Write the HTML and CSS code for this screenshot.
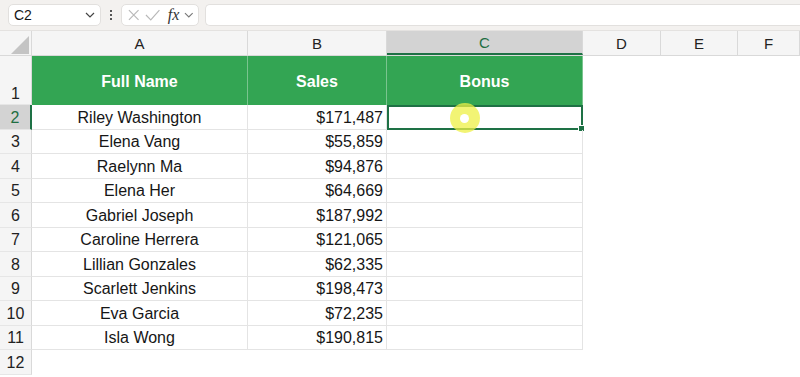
FILE: index.html
```html
<!DOCTYPE html>
<html lang="en">
<head>
    <meta charset="UTF-8">
    <meta name="viewport" content="width=device-width, initial-scale=1.0">
    <title>Sales Bonus</title>
    <link rel="stylesheet" href="styles.css">
</head>
<body>
    <div id="toolbar">
        <div class="name-box">
            <span>C2</span>
            <svg class="chev" width="10" height="6" viewBox="0 0 10 6"><path d="M1 1l4 4 4-4" fill="none" stroke="#444" stroke-width="1.2"/></svg>
        </div>
        <div class="dots"><i></i><i></i><i></i></div>
        <div class="fx-box">
            <svg width="14" height="14" viewBox="0 0 14 14"><path d="M2 2l10 10M12 2L2 12" stroke="#b8b8b8" stroke-width="1.2"/></svg>
            <svg width="16" height="14" viewBox="0 0 16 14"><path d="M1 7l5 5 9-10" fill="none" stroke="#b8b8b8" stroke-width="1.2"/></svg>
            <span class="fx">fx</span>
            <svg class="chev" width="10" height="6" viewBox="0 0 10 6"><path d="M1 1l4 4 4-4" fill="none" stroke="#777" stroke-width="1.1"/></svg>
        </div>
        <div class="formula"></div>
    </div>

    <div id="sheet">
        <div class="row col-heads">
            <div class="corner"><span class="tri"></span></div>
            <div class="ch">A</div>
            <div class="ch">B</div>
            <div class="ch active">C</div>
            <div class="ch">D</div>
            <div class="ch">E</div>
            <div class="ch">F</div>
        </div>

        <div class="row head-row">
            <div class="rh">1</div>
            <div class="cell th">Full Name</div>
            <div class="cell th">Sales</div>
            <div class="cell th">Bonus</div>
        </div>

        <div class="row">
            <div class="rh active">2</div>
            <div class="cell name">Riley Washington</div>
            <div class="cell num">$171,487</div>
            <div class="cell selected">
                <span class="handle"></span>
                <span class="pointer"><b></b></span>
            </div>
        </div>
        <div class="row"><div class="rh">3</div><div class="cell name">Elena Vang</div><div class="cell num">$55,859</div><div class="cell"></div></div>
        <div class="row"><div class="rh">4</div><div class="cell name">Raelynn Ma</div><div class="cell num">$94,876</div><div class="cell"></div></div>
        <div class="row"><div class="rh">5</div><div class="cell name">Elena Her</div><div class="cell num">$64,669</div><div class="cell"></div></div>
        <div class="row"><div class="rh">6</div><div class="cell name">Gabriel Joseph</div><div class="cell num">$187,992</div><div class="cell"></div></div>
        <div class="row"><div class="rh">7</div><div class="cell name">Caroline Herrera</div><div class="cell num">$121,065</div><div class="cell"></div></div>
        <div class="row"><div class="rh">8</div><div class="cell name">Lillian Gonzales</div><div class="cell num">$62,335</div><div class="cell"></div></div>
        <div class="row"><div class="rh">9</div><div class="cell name">Scarlett Jenkins</div><div class="cell num">$198,473</div><div class="cell"></div></div>
        <div class="row"><div class="rh">10</div><div class="cell name">Eva Garcia</div><div class="cell num">$72,235</div><div class="cell"></div></div>
        <div class="row"><div class="rh">11</div><div class="cell name">Isla Wong</div><div class="cell num">$190,815</div><div class="cell"></div></div>
        <div class="row"><div class="rh">12</div></div>
    </div>
</body>
</html>
```

FILE: styles.css
```css
body {
    margin: 0;
    font-family: "Liberation Sans", Arial, sans-serif;
    background: #fff;
    color: #161616;
    overflow: hidden;
}

/* formula bar */
#toolbar {
    height: 31px;
    box-sizing: border-box;
    padding: 4px 0 4px 8px;
    background: #f3f1ef;
    display: flex;
    align-items: stretch;
    gap: 6px;
    border-bottom: 1px solid #e4e2e0;
}

.name-box {
    width: 93px;
    box-sizing: border-box;
    background: #fff;
    border: 1px solid #e2e0de;
    border-radius: 5px;
    display: flex;
    align-items: center;
    justify-content: space-between;
    padding: 0 5px 0 5px;
    font-size: 14px;
}

.dots {
    width: 8px;
    display: flex;
    flex-direction: column;
    justify-content: center;
    align-items: center;
    gap: 2px;
}

.dots i {
    width: 2px;
    height: 2px;
    background: #555;
}

.fx-box {
    width: 78px;
    box-sizing: border-box;
    background: #fff;
    border: 1px solid #e2e0de;
    border-radius: 5px;
    display: flex;
    align-items: center;
    gap: 5px;
    padding: 0 4px 0 5px;
}

.fx {
    font-family: "Liberation Serif", serif;
    font-style: italic;
    font-size: 16px;
    color: #333;
    margin-left: 2px;
}

.formula {
    flex: 1;
    background: #fff;
    border: 1px solid #e2e0de;
    border-right: none;
    border-radius: 5px 0 0 5px;
}

/* grid */
.row {
    display: grid;
    grid-template-columns: 32px 216px 139px 196px 78px 77px 1fr;
    height: 24.5px;
}

.col-heads {
    height: 25px;
    background: #f5f5f5;
    border-bottom: 1px solid #d9d9d9;
    box-sizing: border-box;
}

.corner {
    position: relative;
    border-right: 1px solid #d9d9d9;
}

.tri {
    position: absolute;
    right: 2px;
    bottom: 1px;
    width: 0;
    height: 0;
    border-left: 18px solid transparent;
    border-bottom: 18px solid #c4c4c4;
}

.ch {
    display: flex;
    align-items: center;
    justify-content: center;
    font-size: 15px;
    color: #222;
    border-right: 1px solid #d9d9d9;
}

.ch.active {
    background: #d3d3d3;
    color: #1e6e42;
    border-bottom: 2px solid #1e7145;
}

.rh {
    background: #f5f5f5;
    border-right: 1px solid #d9d9d9;
    border-bottom: 1px solid #e6e6e6;
    box-sizing: border-box;
    display: flex;
    align-items: center;
    justify-content: center;
    padding-top: 2px;
    font-size: 16px;
    color: #222;
}

.rh.active {
    background: #d3d3d3;
    color: #1e6e42;
    border-right: 2px solid #1e7145;
}

.head-row {
    height: 49px;
}

.head-row .rh {
    align-items: flex-end;
    padding-bottom: 1px;
}

.cell {
    border-right: 1px solid #e4e4e4;
    border-bottom: 1px solid #e4e4e4;
    box-sizing: border-box;
    display: flex;
    align-items: center;
    padding-top: 2px;
    font-size: 16px;
    position: relative;
}

.th {
    background: #33a553;
    color: #fff;
    font-weight: bold;
    justify-content: center;
    border-right-color: rgba(255, 255, 255, 0.35);
    border-bottom: none;
}

.name {
    justify-content: center;
}

.num {
    justify-content: flex-end;
    padding-right: 3px;
}

.selected {
    border: 2px solid #1e7145;
    padding-top: 0;
}

.handle {
    position: absolute;
    right: -4px;
    bottom: -4px;
    width: 5px;
    height: 5px;
    background: #1e7145;
    border: 1px solid #fff;
}

/* cursor highlight */
.pointer {
    position: absolute;
    left: 61px;
    top: -4px;
    width: 30px;
    height: 30px;
    border-radius: 50%;
    background: rgba(238, 240, 70, 0.75);
}

.pointer b {
    position: absolute;
    left: 10px;
    top: 11px;
    width: 9px;
    height: 9px;
    border-radius: 50%;
    background: #fff;
}
```
